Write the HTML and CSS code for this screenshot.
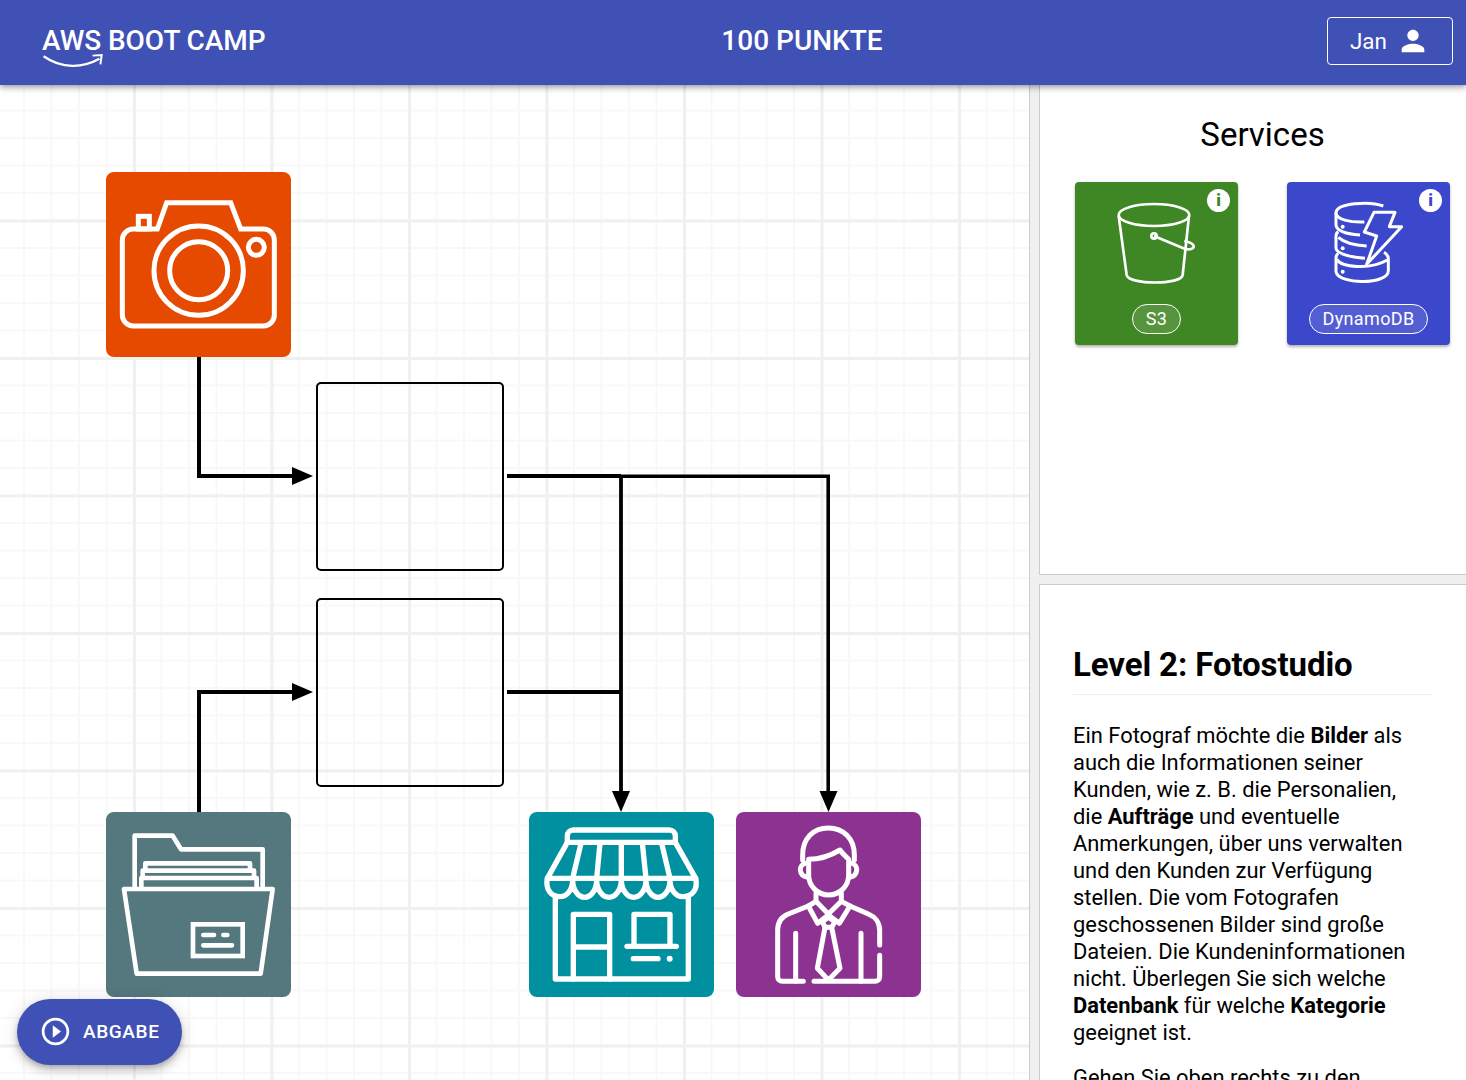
FILE: index.html
```html
<!DOCTYPE html>
<html lang="de">
<head>
    <meta charset="UTF-8">
    <title>AWS Boot Camp</title>
    <link rel="stylesheet" href="styles.css">
</head>
<body>
    <header class="topbar">
        <div class="logo">
            AWS BOOT CAMP
            <svg class="logo-smile" viewBox="126 162 186 46" width="62" height="15">
                <path d="M129 172C185 212 250 208 300 180" fill="none" stroke="#fff" stroke-width="7"/>
                <path d="M279 170L307 168L303 197" fill="none" stroke="#fff" stroke-width="6"/>
            </svg>
        </div>
        <div class="points">100 PUNKTE</div>
        <button class="user-btn">
            Jan
            <svg viewBox="0 0 24 24" width="34" height="34"><path fill="#fff" d="M12 12c2.21 0 4-1.79 4-4s-1.79-4-4-4-4 1.79-4 4 1.79 4 4 4zm0 2c-2.67 0-8 1.34-8 4v2h16v-2c0-2.66-5.33-4-8-4z"/></svg>
        </button>
    </header>

    <div class="layout">
        <main class="canvas">
            <svg class="wires" viewBox="0 85 1030 995" width="1030" height="995">
                <g fill="none" stroke="#000" stroke-width="4">
                    <path d="M199 357V476H296"/>
                    <path d="M199 812V692H296"/>
                    <path d="M507 476H621"/>
                    <path d="M507 692H621"/>
                </g>
                <path d="M621 476.2H828.2V794" fill="none" stroke="#000" stroke-width="3.6"/>
                <path d="M621 476V794" fill="none" stroke="#000" stroke-width="3.8"/>
                <path d="M292 467L313 476L292 485Z"/>
                <path d="M292 683L313 692L292 701Z"/>
                <path d="M612 791L621 812L630 791Z"/>
                <path d="M819.5 791L828.5 812L837.5 791Z"/>
            </svg>

            <div class="node node-camera">
                <svg viewBox="318 516 555 555" fill="none" stroke="#fff" stroke-width="15">
                    <path d="M472 687L500 608H692L722 687H790A33 33 0 0 1 823 720V945A33 33 0 0 1 790 978H400A33 33 0 0 1 367 945V720A33 33 0 0 1 400 687Z"/>
                    <rect x="415" y="649" width="33" height="38"/>
                    <circle cx="596" cy="812" r="134"/>
                    <circle cx="596" cy="812" r="87"/>
                    <circle cx="769" cy="742" r="24"/>
                </svg>
            </div>

            <div class="slot slot-one"></div>
            <div class="slot slot-two"></div>

            <div class="node node-folder">
                <svg viewBox="318 36 555 555" fill="none" stroke="#fff" stroke-width="14" stroke-linejoin="round">
                    <path d="M404 262V107H518L543 148H788V262"/>
                    <path d="M436 216V190H750V216"/>
                    <path d="M428 238V212H762V238"/>
                    <path d="M424 262V234H770V262"/>
                    <path d="M372 267H818L782 521H410Z"/>
                    <rect x="579" y="373" width="149" height="95" stroke-linejoin="miter"/>
                    <path d="M610 405H642M670 405H682M610 436H696" stroke-linecap="round"/>
                </svg>
            </div>

            <div class="node node-shop">
                <svg viewBox="27 36 555 555" fill="none" stroke="#fff" stroke-width="16" stroke-linejoin="round" stroke-linecap="round">
                    <path d="M142 127V108A18 18 0 0 1 160 90H448A18 18 0 0 1 466 108V127"/>
                    <path d="M142 127H466L527 235H82Z"/>
                    <path d="M183 130L158 235M240 130L230 235M304 130V235M367 130L378 235M425 130L450 235"/>
                    <path d="M82 235C75 270 95 290 120 290C140 290 158 270 158 240C158 270 175 292 194 292C212 292 230 270 230 240C230 270 248 292 267 292C286 292 304 270 304 240C304 270 322 292 341 292C360 292 378 270 378 240C378 270 396 292 414 292C433 292 450 270 450 240C450 270 468 290 488 290C515 290 535 270 527 235"/>
                    <path d="M106 290V537H505V290"/>
                    <path d="M160 537V343H269V537M160 441H269"/>
                    <path d="M342 436V343H450V436"/>
                    <path d="M321 439H469M340 476H414"/>
                    <circle cx="449" cy="476" r="9" fill="#fff" stroke="none"/>
                </svg>
            </div>

            <div class="node node-person">
                <svg viewBox="648 36 555 555" fill="none" stroke="#fff" stroke-width="15" stroke-linejoin="round" stroke-linecap="round">
                    <path d="M848 180V165C848 115 880 84 925 84C970 84 1003 115 1003 165V180"/>
                    <path d="M866 178C900 178 930 168 960 150C970 165 985 175 986 178V225A60 60 0 0 1 866 225Z"/>
                    <path d="M856 190C835 195 835 228 864 232M996 190C1016 195 1016 228 988 232"/>
                    <path d="M888 280V304L925 342L964 304V280"/>
                    <path d="M888 304L865 318L893 370L925 345L958 370L990 318L964 304"/>
                    <path d="M907 365L925 352L945 365L935 382H915Z"/>
                    <path d="M915 382L892 505L925 540L960 505L935 382"/>
                    <path d="M865 318L805 342C785 350 773 368 773 390V530A14 14 0 0 0 787 544H850"/>
                    <path d="M990 318L1045 342C1065 350 1079 368 1079 390V435M1079 466V530A14 14 0 0 1 1065 544H882"/>
                    <path d="M827 400V544M1023 400V544"/>
                </svg>
            </div>

            <button class="submit-fab">
                <svg viewBox="0 0 24 24" width="33" height="33"><path fill="#fff" d="M10 16.5l6-4.5-6-4.5v9zM12 2C6.48 2 2 6.48 2 12s4.48 10 10 10 10-4.48 10-10S17.52 2 12 2zm0 18c-4.41 0-8-3.59-8-8s3.59-8 8-8 8 3.59 8 8-3.59 8-8 8z"/></svg>
                ABGABE
            </button>
        </main>

        <aside class="side">
            <section class="services">
                <h2>Services</h2>
                <div class="service-grid">
                    <div class="service service-s3">
                        <span class="info">i</span>
                        <svg class="service-icon" viewBox="135 546 489 330" fill="none" stroke="#fff" stroke-width="8">
                            <ellipse cx="372" cy="645" rx="106" ry="33"/>
                            <path d="M266 648L290 825C295 855 455 855 458 825L477 648"/>
                            <circle cx="372" cy="708" r="8"/>
                            <path d="M372 708L460 745C478 752 494 745 491 738C488 730 475 725 463 723"/>
                        </svg>
                        <span class="chip">S3</span>
                    </div>
                    <div class="service service-dynamo">
                        <span class="info">i</span>
                        <svg class="service-icon" viewBox="771 546 489 330" fill="none" stroke="#fff" stroke-width="9" stroke-linejoin="round">
                            <path d="M1060 618C1020 603 920 608 918 638C918 658 960 668 1003 666"/>
                            <path d="M918 638V675C920 692 950 702 990 705"/>
                            <path d="M925 695C916 700 918 708 918 715V745C920 760 960 772 1005 775"/>
                            <path d="M925 760C916 765 918 772 918 780V815C925 855 1075 855 1075 812V775C1075 768 1070 762 1062 757"/>
                            <path d="M920 778C935 802 1020 810 1072 780"/>
                            <path d="M925 712C945 730 975 736 1010 738"/>
                            <path d="M1032 637H1095L1078 680H1115L1010 793L1040 708L1003 696Z"/>
                            <g fill="#fff" stroke="none"><circle cx="938" cy="680" r="6"/><circle cx="938" cy="745" r="6"/><circle cx="938" cy="815" r="6"/></g>
                        </svg>
                        <span class="chip">DynamoDB</span>
                    </div>
                </div>
            </section>

            <section class="level">
                <h1>Level 2: Fotostudio</h1>
                <p>Ein Fotograf möchte die <b>Bilder</b> als auch die Informationen seiner Kunden, wie z. B. die Personalien, die <b>Aufträge</b> und eventuelle Anmerkungen, über uns verwalten und den Kunden zur Verfügung stellen. Die vom Fotografen geschossenen Bilder sind große Dateien. Die Kundeninformationen nicht. Überlegen Sie sich welche <b>Datenbank</b> für welche <b>Kategorie</b> geeignet ist.</p>
                <p>Gehen Sie oben rechts zu den Services und ziehen Sie die passenden Dienste auf das Diagramm.</p>
            </section>
        </aside>
    </div>
</body>
</html>
```
FILE: styles.css
```css
html, body {
    margin: 0;
    height: 1080px;
    overflow: hidden;
}

body {
    font-family: Roboto, "Liberation Sans", sans-serif;
    background: #fff;
    color: #000;
}

.topbar {
    position: relative;
    z-index: 2;
    display: flex;
    justify-content: space-between;
    align-items: center;
    height: 82px;
    padding: 0 13px 3px 42px;
    background: #3f51b5;
    color: #fff;
    box-shadow: 0 2px 4px -1px rgba(0,0,0,0.2), 0 4px 5px 0 rgba(0,0,0,0.14), 0 1px 10px 0 rgba(0,0,0,0.12);
}

.logo {
    position: relative;
    width: 235px;
    margin-bottom: 2px;
    font-size: 28px;
    font-weight: 500;
    letter-spacing: -0.08px;
    white-space: nowrap;
}

.logo-smile {
    position: absolute;
    left: 0;
    top: 29px;
}

.points {
    margin-bottom: 2px;
    font-size: 28px;
    font-weight: 500;
}

.user-btn {
    display: flex;
    align-items: center;
    gap: 9px;
    box-sizing: border-box;
    width: 126px;
    height: 48px;
    padding: 0 0 0 22px;
    border: 1px solid #fff;
    border-radius: 4px;
    background: none;
    color: #fff;
    font: 400 22.4px Roboto, sans-serif;
}

.layout {
    display: flex;
    height: 995px;
}

.canvas {
    position: relative;
    flex: none;
    box-sizing: border-box;
    width: 1030px;
    overflow: hidden;
    border-right: 1px solid #ccc;
    background-color: #fff;
    background-image:
        linear-gradient(to right, #f0f0f0 3px, transparent 3px),
        linear-gradient(to bottom, #f0f0f0 3px, transparent 3px),
        linear-gradient(to right, #f8f8f8 2px, transparent 2px),
        linear-gradient(to bottom, #f8f8f8 2px, transparent 2px);
    background-size: 137.5px 137.5px, 137.5px 137.5px, 27.5px 27.5px, 27.5px 27.5px;
    background-position: -4.5px 0, 0 -3px, -4.5px 0, 0 -3px;
}

.wires {
    position: absolute;
    left: 0;
    top: 0;
}

.node {
    position: absolute;
    width: 185px;
    height: 185px;
    border-radius: 8px;
}

.node svg {
    display: block;
    width: 185px;
    height: 185px;
}

.node-camera { left: 106px; top: 87px; background: #e64a00; }
.node-folder { left: 106px; top: 727px; background: #54787d; }
.node-shop { left: 529px; top: 727px; background: #00909f; }
.node-person { left: 736px; top: 727px; background: #8c3391; }

.slot {
    position: absolute;
    left: 316px;
    box-sizing: border-box;
    width: 188px;
    height: 189px;
    border: 2px solid #000;
    border-radius: 5px;
}

.slot-one { top: 297px; }
.slot-two { top: 513px; }

.submit-fab {
    position: absolute;
    left: 17px;
    bottom: 15px;
    display: flex;
    align-items: center;
    gap: 11px;
    box-sizing: border-box;
    width: 165px;
    height: 66px;
    padding: 0 0 2px 22px;
    border: 0;
    border-radius: 33px;
    background: #3f51b5;
    color: #fff;
    font: 500 19px Roboto, sans-serif;
    letter-spacing: 0.6px;
    box-shadow: 0 3px 5px -1px rgba(0,0,0,0.2), 0 6px 10px 0 rgba(0,0,0,0.14), 0 1px 18px 0 rgba(0,0,0,0.12);
}

.side {
    flex: 1;
    display: flex;
    flex-direction: column;
    box-sizing: border-box;
    border-left: 9px solid #f0f0f0;
    background: #f0f0f0;
}

.services, .level {
    background: #fff;
    border-left: 1px solid #ccc;
}

.services {
    box-sizing: border-box;
    height: 490px;
    padding: 0 16px 0 35px;
    border-bottom: 1px solid #ccc;
}

.services h2 {
    margin: 31px 0 28px;
    font-size: 33px;
    line-height: 38px;
    font-weight: 400;
    text-align: center;
}

.service-grid {
    display: grid;
    grid-template-columns: 163px 163px;
    gap: 49px;
}

.service {
    position: relative;
    display: flex;
    flex-direction: column;
    align-items: center;
    box-sizing: border-box;
    height: 163px;
    border-radius: 4px;
    color: #fff;
    box-shadow: 0 2px 3px rgba(0,0,0,0.3);
}

.service-s3 { background: #3f8624; }
.service-dynamo { background: #3b48cc; }

.service-icon {
    width: 163px;
    height: 110px;
}

.info {
    position: absolute;
    top: 7px;
    right: 8px;
    width: 23px;
    height: 23px;
    border-radius: 50%;
    background: #fff;
    font-size: 17px;
    font-weight: 900;
    line-height: 23px;
    text-align: center;
}

.service-s3 .info { color: #3f8624; }
.service-dynamo .info { color: #3b48cc; }

.chip {
    margin-top: 12px;
    padding: 0 12.5px;
    height: 28px;
    border: 1px solid #fff;
    border-radius: 15px;
    background: rgba(255,255,255,0.12);
    font-size: 18px;
    letter-spacing: 0.36px;
    line-height: 28px;
}

.level {
    flex: 1;
    margin-top: 9px;
    padding: 0 34px 0 33px;
    border-top: 1px solid #ccc;
    overflow: hidden;
}

.level h1 {
    margin: 60px 0 27px;
    padding-bottom: 10px;
    border-bottom: 1px solid #eee;
    font-size: 33px;
    line-height: 39px;
    font-weight: 700;
    letter-spacing: -0.1px;
}

.level p {
    max-width: 345px;
    margin: 0 0 18px;
    font-size: 21.9px;
    line-height: 27px;
}
```
